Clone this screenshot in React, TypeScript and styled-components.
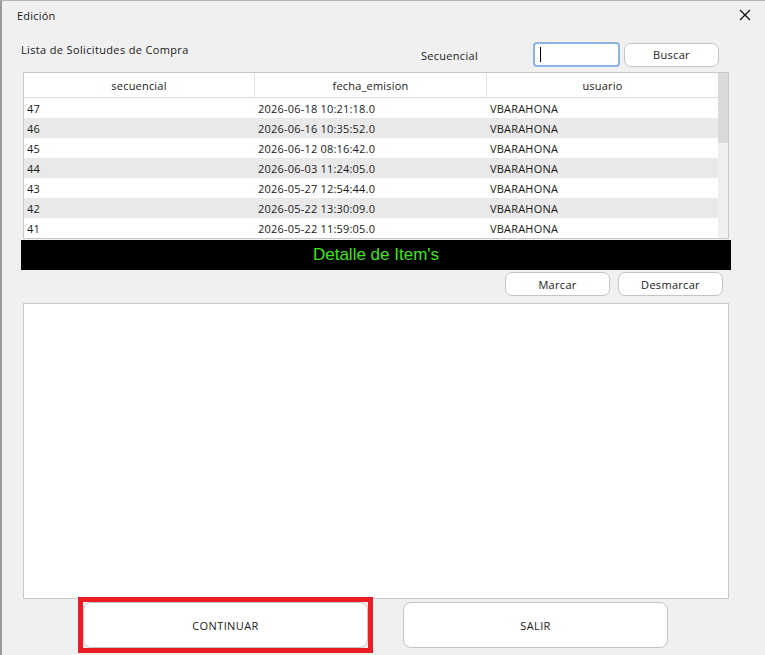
import React from "react";
import styled, { createGlobalStyle } from "styled-components";

const Global = createGlobalStyle`
  html, body { margin: 0; padding: 0; background: #f0f0f0; }
  * { box-sizing: border-box; }
`;

const Window = styled.div`
  width: 765px;
  height: 655px;
  overflow: hidden;
  background: #f0f0f0;
  border-top: 1px solid #b4b4b4;
  border-left: 2px solid #9a9a9a;
  font-family: "Open Sans", "Liberation Sans", sans-serif;
  font-size: 11px;
  color: #1a1a1a;
  display: flex;
  flex-direction: column;
`;

const TitleBar = styled.div`
  height: 28px;
  display: flex;
  align-items: center;
  justify-content: space-between;
  padding: 0 13px 0 15px;
`;

const Title = styled.span`
  font-size: 11px;
  letter-spacing: 0.2px;
`;

const CloseBtn = styled.span`
  width: 14px;
  height: 14px;
  display: flex;
  align-items: center;
  justify-content: center;
`;

const Content = styled.div`
  padding-left: 19px;
  display: flex;
  flex-direction: column;
`;

const TopRow = styled.div`
  height: 43px;
  display: flex;
  justify-content: space-between;
  align-items: flex-start;
`;

const ListLabel = styled.div`
  margin-top: 13px;
  letter-spacing: 0.35px;
`;

const SearchGroup = styled.div`
  margin-top: 13px;
  margin-right: 46px;
  display: flex;
  align-items: center;
`;

const SearchLabel = styled.span`
  margin-right: 55px;
  margin-top: 2px;
  letter-spacing: 0.3px;
`;

const FakeInput = styled.div`
  width: 87px;
  height: 25px;
  border: 2px solid #8cb4e6;
  border-radius: 4px;
  background: #fff;
  display: flex;
  align-items: center;
  padding-left: 5px;
  margin-right: 4px;
`;

const Caret = styled.span`
  width: 1px;
  height: 15px;
  background: #000;
`;

const SmallButton = styled.button<{ $w: number }>`
  width: ${(p) => p.$w}px;
  height: 24px;
  background: #fff;
  border: 1px solid #c4c4c4;
  border-radius: 7px;
  font-family: inherit;
  font-size: 11px;
  color: #1a1a1a;
  letter-spacing: 0.3px;
  padding: 0;
`;

const Table = styled.div`
  margin-left: 2px;
  width: 706px;
  height: 167px;
  border: 1px solid #c8c8c8;
  background: #fff;
  display: flex;
  overflow: hidden;
`;

const TableBody = styled.div`
  flex: 1;
  display: flex;
  flex-direction: column;
`;

const Row = styled.div<{ $alt?: boolean; $head?: boolean }>`
  display: grid;
  grid-template-columns: 231px 232px 231px;
  height: ${(p) => (p.$head ? 25 : 20)}px;
  background: ${(p) => (p.$alt ? "#e9e9e9" : "#fff")};
  border-bottom: ${(p) => (p.$head ? "1px solid #dcdcdc" : "none")};
`;

const Cell = styled.div<{ $head?: boolean }>`
  display: flex;
  align-items: center;
  justify-content: ${(p) => (p.$head ? "center" : "flex-start")};
  padding-left: ${(p) => (p.$head ? 0 : 3)}px;
  border-right: ${(p) => (p.$head ? "1px solid #e2e2e2" : "none")};
  white-space: nowrap;
  letter-spacing: 0.2px;
  &:last-child { border-right: none; }
`;

const ScrollTrack = styled.div`
  width: 11px;
  background: #f0f0f0;
  display: flex;
  flex-direction: column;
`;

const ScrollThumb = styled.div`
  height: 70px;
  background: #dadada;
`;

const DetailBar = styled.div`
  margin-top: 1px;
  width: 710px;
  height: 30px;
  background: #000;
  color: #3ee61a;
  font-family: "Liberation Sans", Arial, sans-serif;
  font-size: 17px;
  display: flex;
  align-items: center;
  justify-content: center;
  padding-bottom: 1px;
`;

const MarkRow = styled.div`
  margin-top: 2px;
  width: 702px;
  display: flex;
  justify-content: flex-end;
  gap: 8px;
`;

const DetailPanel = styled.div`
  margin-top: 7px;
  margin-left: 2px;
  width: 706px;
  height: 296px;
  border: 1px solid #c8c8c8;
  background: #fff;
`;

const BottomRow = styled.div`
  margin-top: -2px;
  padding-left: 76px;
  display: flex;
  align-items: center;
  gap: 30px;
`;

const Highlight = styled.div`
  border: 5px solid #ec1c24;
  display: flex;
`;

const BigButton = styled.button<{ $w: number }>`
  width: ${(p) => p.$w}px;
  height: 46px;
  background: #fff;
  border: 1px solid #c4c4c4;
  border-radius: 8px;
  font-family: inherit;
  font-size: 11px;
  color: #1a1a1a;
  letter-spacing: 0.4px;
  padding: 0;
`;

const rows = [
  ["47", "2026-06-18 10:21:18.0", "VBARAHONA"],
  ["46", "2026-06-16 10:35:52.0", "VBARAHONA"],
  ["45", "2026-06-12 08:16:42.0", "VBARAHONA"],
  ["44", "2026-06-03 11:24:05.0", "VBARAHONA"],
  ["43", "2026-05-27 12:54:44.0", "VBARAHONA"],
  ["42", "2026-05-22 13:30:09.0", "VBARAHONA"],
  ["41", "2026-05-22 11:59:05.0", "VBARAHONA"],
];

export default function App() {
  return (
    <>
      <Global />
      <Window>
        <TitleBar>
          <Title>Edición</Title>
          <CloseBtn>
            <svg width="12" height="12" viewBox="0 0 12 12">
              <path d="M1 1 L11 11 M11 1 L1 11" stroke="#111" strokeWidth="1.3" />
            </svg>
          </CloseBtn>
        </TitleBar>
        <Content>
          <TopRow>
            <ListLabel>Lista de Solicitudes de Compra</ListLabel>
            <SearchGroup>
              <SearchLabel>Secuencial</SearchLabel>
              <FakeInput>
                <Caret />
              </FakeInput>
              <SmallButton $w={95}>Buscar</SmallButton>
            </SearchGroup>
          </TopRow>
          <Table>
            <TableBody>
              <Row $head>
                <Cell $head>secuencial</Cell>
                <Cell $head>fecha_emision</Cell>
                <Cell $head>usuario</Cell>
              </Row>
              {rows.map((r, i) => (
                <Row key={r[0]} $alt={i % 2 === 1}>
                  {r.map((c, j) => (
                    <Cell key={j}>{c}</Cell>
                  ))}
                </Row>
              ))}
            </TableBody>
            <ScrollTrack>
              <ScrollThumb />
            </ScrollTrack>
          </Table>
          <DetailBar>Detalle de Item's</DetailBar>
          <MarkRow>
            <SmallButton $w={105}>Marcar</SmallButton>
            <SmallButton $w={105}>Desmarcar</SmallButton>
          </MarkRow>
          <DetailPanel />
        </Content>
        <BottomRow>
          <Highlight>
            <BigButton $w={285}>CONTINUAR</BigButton>
          </Highlight>
          <BigButton $w={265}>SALIR</BigButton>
        </BottomRow>
      </Window>
    </>
  );
}
